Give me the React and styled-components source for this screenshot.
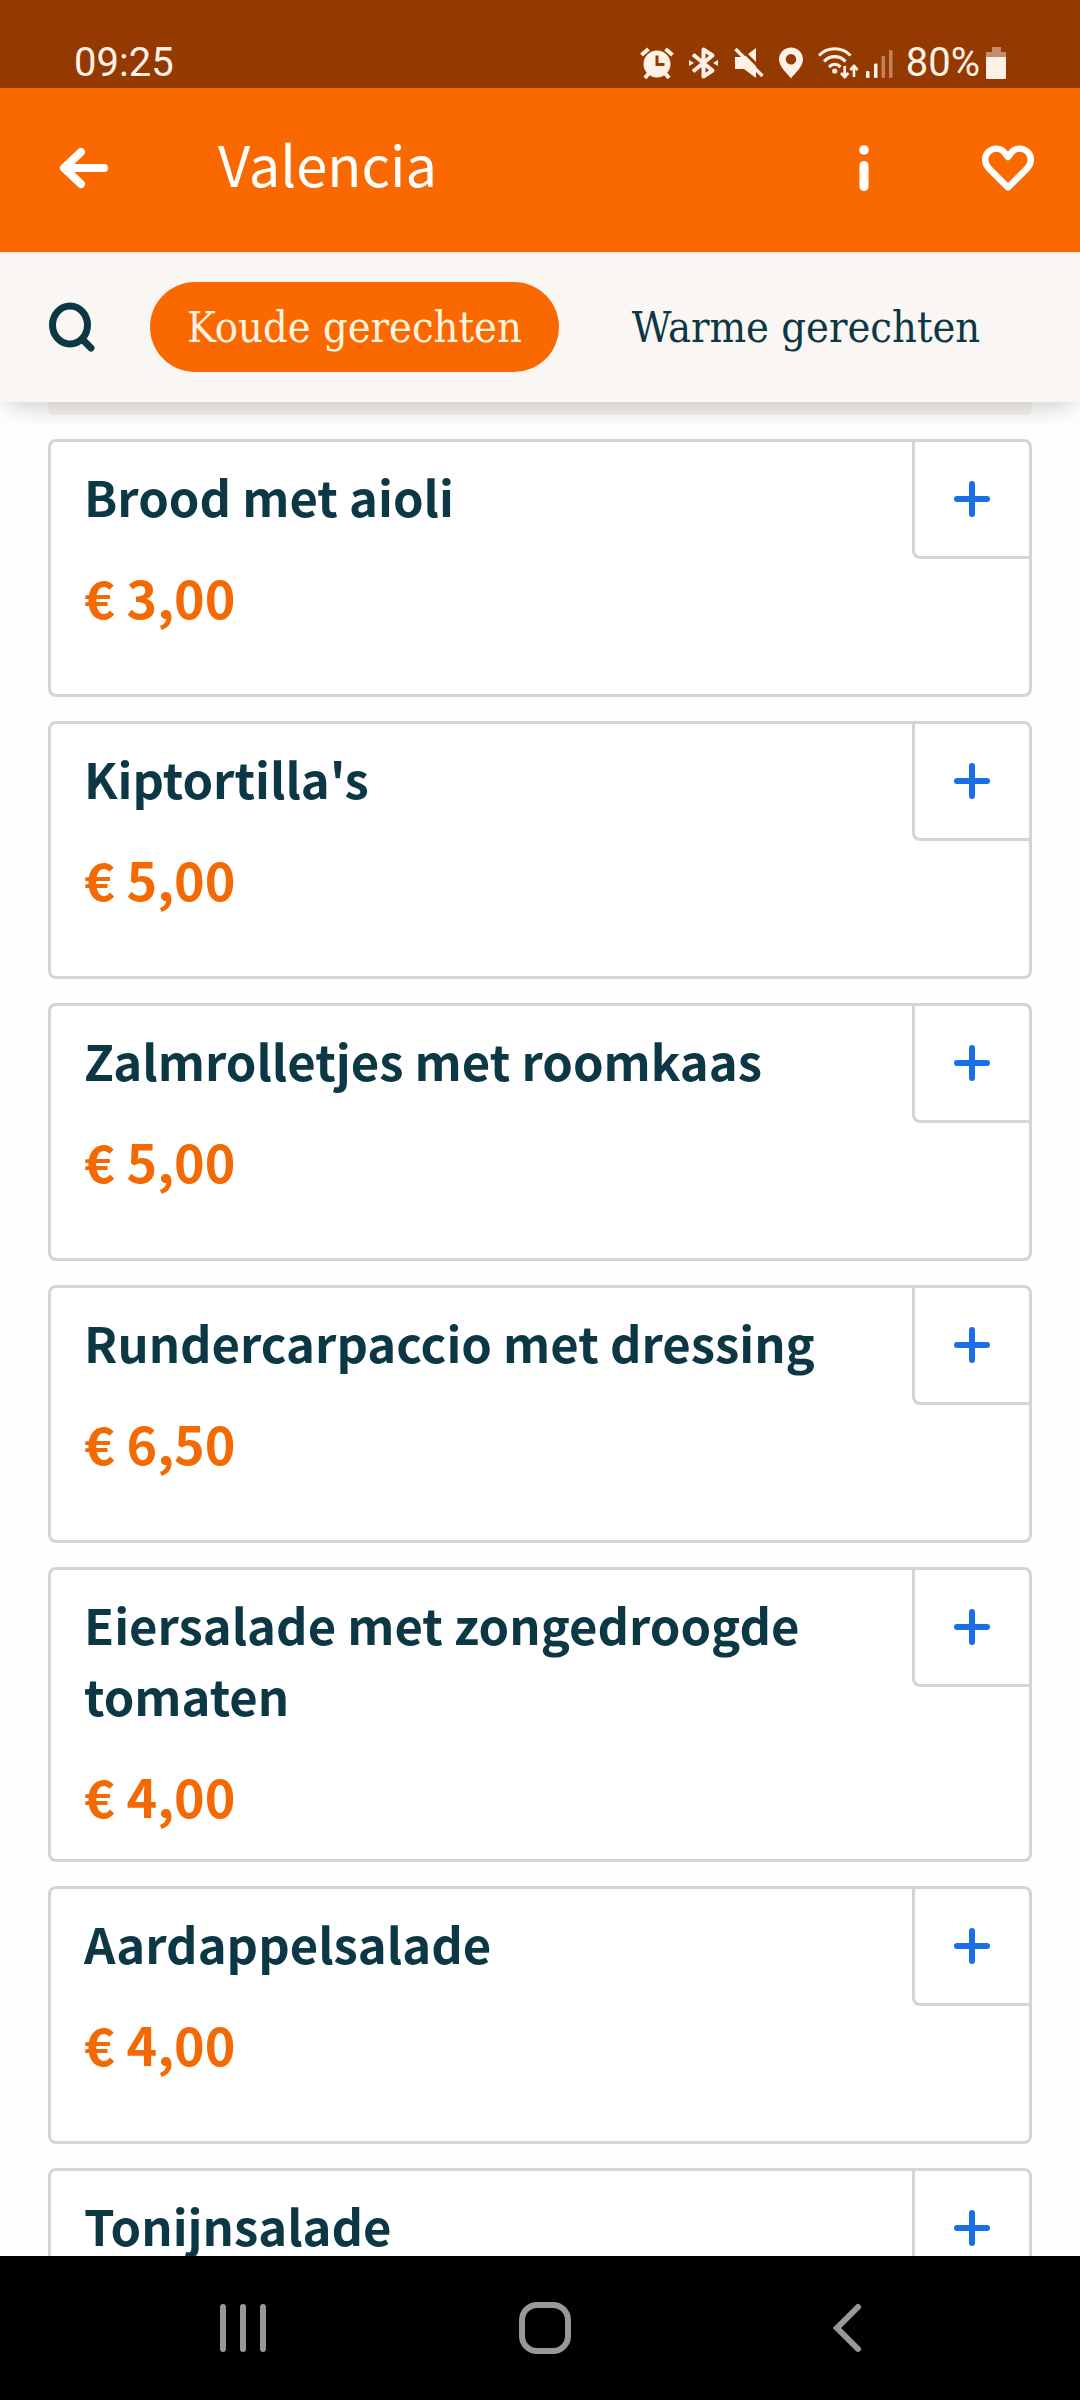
import React, { useState } from 'react';
import styled, { createGlobalStyle } from 'styled-components';

const GlobalStyle = createGlobalStyle`
    * {
        box-sizing: border-box;
    }
    body {
        margin: 0;
        background: #fefefe;
        font-family: 'Noto Sans CJK SC', 'Open Sans', sans-serif;
        color: #0c3744;
    }
    button {
        padding: 0;
        border: 0;
        background: none;
        color: inherit;
        font: inherit;
        cursor: pointer;
    }
    svg {
        display: block;
        flex-shrink: 0;
        overflow: visible;
    }
`;

const Screen = styled.div`
    display: flex;
    flex-direction: column;
    height: 100vh;
`;

// Status bar
const StatusBar = styled.div`
    display: flex;
    align-items: center;
    justify-content: space-between;
    height: 88px;
    padding: 38px 74px 0;
    background: #943a00;
    color: #fff1e6;
    font-family: Roboto, sans-serif;
    font-size: 40px;
    line-height: 48px;
`;

const StatusRight = styled.div`
    display: flex;
    align-items: center;
`;

const StatusIcons = styled.div`
    display: flex;
    gap: 15px;
    margin-right: 8px;
`;

const Percent = styled.span`
    margin: 0 6px 0 13px;
`;

// Header
const Header = styled.header`
    display: flex;
    align-items: center;
    height: 164px;
    padding: 0 40px 4px 52px;
    background: #fa6900;
    color: #fff;
`;

const HeaderButton = styled.button`
    display: flex;
    align-items: center;
    justify-content: center;
    width: 64px;
    height: 80px;
`;

const HeaderTitle = styled.h1`
    flex: 1;
    margin: 0;
    padding: 0 0 10px 102px;
    font-size: 56px;
    font-weight: 400;
    line-height: 80px;
`;

const HeaderActions = styled.div`
    display: flex;
    gap: 80px;
`;

// Categories
const CategoryBar = styled.nav`
    position: relative;
    z-index: 1;
    display: flex;
    align-items: center;
    padding: 28px 48px 30px;
    border-top: 2px solid #efe9e0;
    background: #f9f6f3;
    box-shadow: 0 12px 24px -8px rgba(0, 0, 0, 0.2);
`;

const SearchButton = styled.button`
    margin-right: 54px;
`;

const CategoryTabs = styled.div`
    display: flex;
    gap: 36px;
`;

const CategoryTab = styled.button`
    height: 90px;
    padding: 0 37px;
    border-radius: 45px;
    background: ${(p) => (p.$active ? '#fa6900' : 'transparent')};
    color: ${(p) => (p.$active ? '#fff4e2' : '#0c3744')};
    font-family: 'DejaVu Serif Condensed', 'DejaVu Serif', serif;
    font-size: 43px;
    font-weight: 300;
    line-height: 90px;
    white-space: nowrap;
`;

// Menu
const Menu = styled.main`
    flex: 1;
    min-height: 0;
    overflow: hidden;
    padding: 0 48px;
`;

const CategoryBanner = styled.div`
    height: 13px;
    border-radius: 0 0 6px 6px;
    background: #f7f2ed;
`;

const MenuList = styled.ul`
    display: flex;
    flex-direction: column;
    gap: 24px;
    margin: 24px 0 0;
    padding: 0;
    list-style: none;
`;

const MenuCard = styled.li`
    display: flex;
    align-items: flex-start;
    min-height: 258px;
    border: 3px solid #d4d4d4;
    border-radius: 8px;
    background: #fff;
`;

const MenuText = styled.div`
    flex: 1;
    padding: 18px 32px 28px 33px;
    line-height: 71px;
`;

const DishName = styled.h2`
    margin: 0;
    font-size: 49px;
    font-weight: 700;
`;

const Price = styled.p`
    margin: 30px 0 0;
    color: #f36a05;
    font-size: 52px;
    font-weight: 700;
`;

const AddButton = styled.button`
    display: flex;
    align-items: center;
    justify-content: center;
    width: 117px;
    height: 117px;
    border: solid #d4d4d4;
    border-width: 0 0 3px 3px;
    border-radius: 0 0 0 8px;
    color: #1a6fe8;
`;

// Android navigation
const SystemNav = styled.nav`
    display: flex;
    justify-content: center;
    height: 144px;
    padding-left: 10px;
    background: #000;
    color: #989898;
`;

const SystemButton = styled.button`
    display: flex;
    align-items: center;
    justify-content: center;
    width: 302px;
`;

const AlarmIcon = () => (
    <svg width="34" height="34" viewBox="0 0 34 34" fill="none" stroke="currentColor" strokeWidth="4">
        <circle cx="17" cy="18" r="13.5" fill="currentColor" stroke="none" />
        <path d="M1.5 9 8.5 3M25.5 3l7 6" />
        <path d="M9 27l-4 5M25 27l4 5" />
        <path d="M17 9.5v9h7.5" stroke="#943a00" strokeWidth="3" />
    </svg>
);

const BluetoothIcon = () => (
    <svg width="29" height="34" viewBox="0 0 29 34" fill="none" stroke="currentColor" strokeWidth="4">
        <path d="M4 8.5 23.5 24.5 14.5 30.5V3.5l9 6L4 25.5" strokeLinejoin="round" />
        <path d="M0 14l5 3-5 3zM29 14l-5 3 5 3z" fill="currentColor" stroke="none" />
    </svg>
);

const MuteIcon = () => (
    <svg width="31" height="34" viewBox="0 0 31 34" fill="currentColor">
        <path d="M2 11h9L23 2v30l-12-9H2z" />
        <path d="M5 0l27 27" stroke="#943a00" strokeWidth="3" />
        <path d="M2.5 3l27 27" stroke="currentColor" strokeWidth="3.4" />
    </svg>
);

const PinIcon = () => (
    <svg width="24" height="34" viewBox="0 0 24 34" fill="currentColor" fillRule="evenodd">
        <path d="M12 1.5C5.4 1.5 0 6.7 0 13.3 0 21 8 27 12 32.5 16 27 24 21 24 13.3 24 6.7 18.6 1.5 12 1.5zM12 8a5.2 5.2 0 1 0 0 10.4A5.2 5.2 0 0 0 12 8z" />
    </svg>
);

const WifiIcon = () => (
    <svg width="40" height="34" viewBox="0 0 40 34" fill="none" stroke="currentColor" strokeWidth="3.2">
        <path d="M1 9.5c8.5-9 23-9 31.500 0M6 15.500c6-6.500 15.500-6.500 21.500 0M11 21c3.500-3.500 8-3.500 11.500 0" />
        <circle cx="16.7" cy="25" r="2.6" fill="currentColor" stroke="none" />
        <path d="M26.7 20v10M23 27l3.7 4 3.7-4M36 31V21M32.300 24l3.700-4 3.700 4" strokeWidth="2.6" />
    </svg>
);

const SignalIcon = () => (
    <svg width="27" height="34" viewBox="0 0 27 34" fill="currentColor">
        <rect x="0" y="25" width="3.5" height="7" rx="1" />
        <rect x="8" y="17.5" width="3.5" height="14.5" rx="1" />
        <rect x="15.5" y="10" width="3.5" height="22" rx="1" opacity="0.4" />
        <rect x="23" y="4" width="3.5" height="28" rx="1" opacity="0.4" />
    </svg>
);

const BatteryIcon = () => (
    <svg width="20" height="34" viewBox="0 0 20 34" fill="currentColor">
        <path d="M6 1h9v5h5v5H0V6h6z" opacity="0.45" />
        <path d="M0 11h20v20.5a1.5 1.5 0 0 1-1.5 1.5h-17A1.5 1.5 0 0 1 0 31.5z" />
    </svg>
);

const BackIcon = () => (
    <svg width="50" height="42" viewBox="0 0 50 42" fill="none" stroke="currentColor" strokeWidth="8" strokeLinecap="round" strokeLinejoin="round">
        <path d="M22 5 5 21l17 16M5 21h40" />
    </svg>
);

const InfoIcon = () => (
    <svg width="10" height="46" viewBox="0 0 10 46" fill="currentColor">
        <circle cx="5" cy="5" r="4.8" />
        <rect x="0.5" y="16" width="9" height="30" rx="4.5" />
    </svg>
);

const HeartIcon = () => (
    <svg width="52" height="46" viewBox="0 0 52 46" fill="none" stroke="currentColor" strokeWidth="6.4" strokeLinejoin="round">
        <path d="M26 42.5 7 23.500C2 18.500 2 11 6.500 6.800 11 2.500 18.500 2.500 22.500 7.500L26 12l3.500-4.500C33.500 2.500 41 2.500 45.500 6.800 50 11 50 18.500 45 23.500z" />
    </svg>
);

const SearchIcon = () => (
    <svg width="48" height="48" viewBox="0 0 48 48" fill="none" stroke="currentColor" strokeWidth="7" strokeLinecap="round">
        <ellipse cx="22" cy="22" rx="17.5" ry="19" />
        <path d="M36 38l7 7" />
    </svg>
);

const PlusIcon = () => (
    <svg width="36" height="36" viewBox="0 0 36 36" fill="none" stroke="currentColor" strokeWidth="6" strokeLinecap="round">
        <path d="M18 3v30M3 18h30" />
    </svg>
);

const RecentsIcon = () => (
    <svg width="46" height="50" viewBox="0 0 46 50" stroke="currentColor" strokeWidth="6" strokeLinecap="round">
        <path d="M3 4v42M23 4v42M43 4v42" />
    </svg>
);

const HomeIcon = () => (
    <svg width="52" height="52" viewBox="0 0 52 52" fill="none" stroke="currentColor" strokeWidth="6">
        <rect x="3" y="3" width="46" height="46" rx="15" />
    </svg>
);

const ChevronIcon = () => (
    <svg width="30" height="50" viewBox="0 0 30 50" fill="none" stroke="currentColor" strokeWidth="6" strokeLinecap="round">
        <path d="M26 4 5 25l21 21" />
    </svg>
);

const categories = ['Koude gerechten', 'Warme gerechten'];

const dishes = [
    { name: 'Brood met aioli', price: '3,00' },
    { name: "Kiptortilla's", price: '5,00' },
    { name: 'Zalmrolletjes met roomkaas', price: '5,00' },
    { name: 'Rundercarpaccio met dressing', price: '6,50' },
    { name: 'Eiersalade met zongedroogde tomaten', price: '4,00' },
    { name: 'Aardappelsalade', price: '4,00' },
    { name: 'Tonijnsalade', price: '4,00' },
];

const App = () => {
    const [active, setActive] = useState(categories[0]);

    return (
        <Screen>
            <GlobalStyle />
            <StatusBar>
                <span>09:25</span>
                <StatusRight>
                    <StatusIcons>
                        <AlarmIcon />
                        <BluetoothIcon />
                        <MuteIcon />
                        <PinIcon />
                        <WifiIcon />
                    </StatusIcons>
                    <SignalIcon />
                    <Percent>80%</Percent>
                    <BatteryIcon />
                </StatusRight>
            </StatusBar>

            <Header>
                <HeaderButton aria-label="Terug">
                    <BackIcon />
                </HeaderButton>
                <HeaderTitle>Valencia</HeaderTitle>
                <HeaderActions>
                    <HeaderButton aria-label="Informatie">
                        <InfoIcon />
                    </HeaderButton>
                    <HeaderButton aria-label="Favoriet">
                        <HeartIcon />
                    </HeaderButton>
                </HeaderActions>
            </Header>

            <CategoryBar>
                <SearchButton aria-label="Zoeken">
                    <SearchIcon />
                </SearchButton>
                <CategoryTabs>
                    {categories.map((category) => (
                        <CategoryTab key={category} $active={category === active} onClick={() => setActive(category)}>
                            {category}
                        </CategoryTab>
                    ))}
                </CategoryTabs>
            </CategoryBar>

            <Menu>
                <CategoryBanner />
                <MenuList>
                    {dishes.map(({ name, price }) => (
                        <MenuCard key={name}>
                            <MenuText>
                                <DishName>{name}</DishName>
                                <Price>€ {price}</Price>
                            </MenuText>
                            <AddButton aria-label={`${name} toevoegen`}>
                                <PlusIcon />
                            </AddButton>
                        </MenuCard>
                    ))}
                </MenuList>
            </Menu>

            <SystemNav>
                <SystemButton aria-label="Recente apps">
                    <RecentsIcon />
                </SystemButton>
                <SystemButton aria-label="Startscherm">
                    <HomeIcon />
                </SystemButton>
                <SystemButton aria-label="Vorige">
                    <ChevronIcon />
                </SystemButton>
            </SystemNav>
        </Screen>
    );
};

export default App;
